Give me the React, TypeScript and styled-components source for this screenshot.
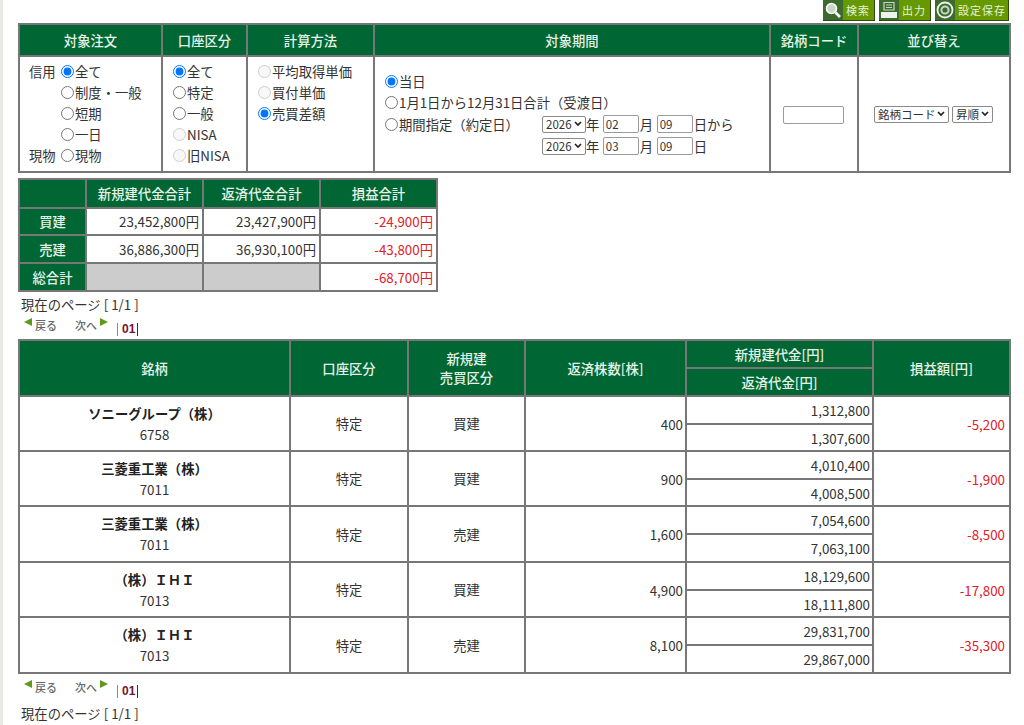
import styled, { createGlobalStyle } from 'styled-components';

const GlobalStyle = createGlobalStyle`
  html, body {
    margin: 0;
    padding: 0;
    background: #fff;
  }
  body {
    font-family: 'Noto Sans CJK JP', 'Noto Sans', sans-serif;
    font-size: 13.33px;
    color: #333;
  }
`;

const Page = styled.div`
  width: 1024px;
  height: 725px;
  overflow: hidden;
  box-sizing: border-box;
  border-left: 3px solid #e8e8e4;
  padding: 0 14px 0 15px;
`;

const Toolbar = styled.div`
  display: flex;
  justify-content: flex-end;
  gap: 4px;
  height: 23px;
  padding-right: 1px;
`;

const ToolButton = styled.div<{ $w: number }>`
  width: ${({ $w }) => $w}px;
  height: 21px;
  display: flex;
  align-items: center;
  background: #669900;
  border-right: 1px solid #2f4a10;
  border-bottom: 1px solid #2f4a10;
  box-sizing: border-box;
  color: #e8f2d8;
  font-size: 11px;
  letter-spacing: 1px;
`;

const ToolIcon = styled.span`
  width: 20px;
  height: 20px;
  flex: none;
  display: flex;
  align-items: center;
  justify-content: center;
  background: #3b6b2e;
  margin-right: 3px;
`;

const Grid = styled.table<{ $w: number }>`
  width: ${({ $w }) => $w}px;
  border-collapse: collapse;
  table-layout: fixed;
  border: 2px solid #777;
  background: #fff;
`;

const Head = styled.th<{ $h?: number }>`
  background: #006633;
  color: #e4f2e8;
  font-weight: 500;
  font-size: 13.33px;
  border: 2px solid #777;
  padding: 0;
  height: ${({ $h }) => $h ?? 29}px;
  text-align: center;
`;

const OptionCell = styled.td<{ $h?: number }>`
  border: 2px solid #777;
  padding: 0;
  vertical-align: top;
  color: #333;
  height: ${({ $h }) => ($h ? `${$h}px` : 'auto')};
`;

const CenterCell = styled(OptionCell)`
  vertical-align: middle;
  text-align: center;
`;

const OptionList = styled.div<{ $pl: number }>`
  display: flex;
  flex-direction: column;
  padding: 4px 0 0 ${({ $pl }) => $pl}px;
`;

const OptionRow = styled.label<{ $h?: number }>`
  display: flex;
  align-items: center;
  height: ${({ $h }) => $h ?? 21}px;
  line-height: 1;
  white-space: nowrap;
`;

const Side = styled.span`
  width: 32px;
  flex: none;
`;

const Radio = styled.input.attrs({ type: 'radio', readOnly: true })`
  width: 13px;
  height: 13px;
  margin: 0 1px 0 0;
  flex: none;
`;

const PeriodBox = styled.div`
  display: flex;
  flex-direction: column;
  padding: 14px 0 0 10px;
`;

const DateRow = styled.div`
  display: flex;
  align-items: center;
  height: 22px;
  white-space: nowrap;
`;

const DatePad = styled.div`
  width: 157px;
  flex: none;
  display: flex;
  align-items: center;
`;

const chevron =
  "url(\"data:image/svg+xml,%3Csvg xmlns='http://www.w3.org/2000/svg' width='8' height='6'%3E%3Cpath d='M1 1 L4 4 L7 1' fill='none' stroke='%23222' stroke-width='1.7'/%3E%3C/svg%3E\")";

const TinySelect = styled.select<{ $w: number }>`
  appearance: none;
  width: ${({ $w }) => $w}px;
  box-sizing: border-box;
  font-family: 'Noto Sans CJK JP', sans-serif;
  font-size: 11.5px;
  line-height: 15px;
  height: 17px;
  padding: 0 0 0 3px;
  margin: 0;
  color: #333;
  background: #fff ${chevron} no-repeat right 3px center;
  border: 1px solid #8a8a8a;
  border-radius: 2px;
`;

const DateInput = styled.input.attrs({ type: 'text', readOnly: true })`
  width: 36px;
  height: 18px;
  box-sizing: border-box;
  border: 1px solid #9a9a9a;
  border-radius: 2px;
  padding: 0 2px;
  margin: 0 1px 0 3.5px;
  font-family: 'Noto Sans CJK JP', sans-serif;
  font-size: 11.5px;
  color: #333;
`;

const CodeInput = styled.input.attrs({ type: 'text', readOnly: true })`
  width: 61px;
  height: 18px;
  box-sizing: border-box;
  border: 1px solid #9a9a9a;
  border-radius: 2px;
  padding: 0;
  margin-right: 2px;
`;

const SortBox = styled.div`
  display: flex;
  justify-content: center;
  gap: 3px;
  padding-right: 1px;
`;

const SummaryTable = styled(Grid)`
  margin-top: 5px;
`;

const Money = styled.td<{ $loss?: boolean }>`
  border: 2px solid #777;
  padding: 0 3px 0 0;
  text-align: right;
  color: ${({ $loss }) => ($loss ? '#e02028' : '#333')};
`;

const BlankCell = styled.td`
  border: 2px solid #777;
  background: #cccccc;
`;

const PageInfo = styled.div<{ $mt: number }>`
  line-height: 18px;
  padding-left: 3px;
  margin-top: ${({ $mt }) => $mt}px;
`;

const Pager = styled.div`
  display: flex;
  height: 21px;
  margin-top: 4px;
  align-items: flex-start;
  padding-left: 6px;
  font-size: 11px;
  font-weight: 500;
  color: #666;
`;

const PagerLink = styled.span<{ $w: number }>`
  width: ${({ $w }) => $w}px;
  display: flex;
  align-items: flex-start;
  gap: 3px;
  line-height: 14px;
`;

const PageNumbers = styled.span`
  margin-top: 5px;
  padding: 0 2px 0 4px;
  border-left: 1px solid #c08040;
  border-right: 1px solid #7a1030;
  font-family: 'Liberation Sans', sans-serif;
  font-weight: 700;
  color: #7a1030;
  line-height: 13px;
  font-size: 12px;
`;

const MainTable = styled(Grid)`
  margin-bottom: 6px;
`;

const Stock = styled(CenterCell)`
  line-height: 21px;
`;

const StockName = styled.div`
  font-weight: 700;
  color: #222;
`;

const Plain = styled(CenterCell)``;

const Amount = styled.td<{ $loss?: boolean; $h?: number }>`
  border: 2px solid #777;
  padding: 1px ${({ $loss }) => ($loss ? 4 : 2)}px 0 0;
  text-align: right;
  height: ${({ $h }) => $h ?? 25}px;
  color: ${({ $loss }) => ($loss ? '#e02028' : '#333')};
`;

function LeftArrow() {
  return (
    <svg width="8" height="8" viewBox="0 0 8 8">
      <path d="M8 0 L0 4 L8 8 Z" fill="#5f9a1e" />
    </svg>
  );
}

function RightArrow() {
  return (
    <svg width="8" height="8" viewBox="0 0 8 8">
      <path d="M0 0 L8 4 L0 8 Z" fill="#5f9a1e" />
    </svg>
  );
}

function PagerBar() {
  return (
    <Pager>
      <PagerLink $w={51}>
        <LeftArrow />
        戻る
      </PagerLink>
      <PagerLink $w={42}>
        次へ
        <RightArrow />
      </PagerLink>
      <PageNumbers>01</PageNumbers>
    </Pager>
  );
}

// full-width brackets and latin letters, as the broker's page prints them
const KABU = '\uFF08株\uFF09';
const IHI = '\uFF29\uFF28\uFF29';

const rows = [
  { name: `ソニーグループ${KABU}`, code: '6758', side: '買建', qty: '400', open: '1,312,800', close: '1,307,600', pl: '-5,200', tall: false },
  { name: `三菱重工業${KABU}`, code: '7011', side: '買建', qty: '900', open: '4,010,400', close: '4,008,500', pl: '-1,900', tall: false },
  { name: `三菱重工業${KABU}`, code: '7011', side: '売建', qty: '1,600', open: '7,054,600', close: '7,063,100', pl: '-8,500', tall: true },
  { name: `${KABU}${IHI}`, code: '7013', side: '買建', qty: '4,900', open: '18,129,600', close: '18,111,800', pl: '-17,800', tall: false },
  { name: `${KABU}${IHI}`, code: '7013', side: '売建', qty: '8,100', open: '29,831,700', close: '29,867,000', pl: '-35,300', tall: true },
];

function RowGroup({ row }: { row: (typeof rows)[number] }) {
  return (
    <>
      <tr>
        <Stock rowSpan={2}>
          <StockName>{row.name}</StockName>
          {row.code}
        </Stock>
        <Plain rowSpan={2}>特定</Plain>
        <Plain rowSpan={2}>{row.side}</Plain>
        <Amount rowSpan={2}>{row.qty}</Amount>
        <Amount>{row.open}</Amount>
        <Amount rowSpan={2} $loss>{row.pl}</Amount>
      </tr>
      <tr>
        <Amount $h={row.tall ? 25 : 24}>{row.close}</Amount>
      </tr>
    </>
  );
}

export default function App() {
  return (
    <Page>
      <GlobalStyle />
      <Toolbar>
        <ToolButton $w={52}>
          <ToolIcon>
            <svg width="18" height="18" viewBox="0 0 18 18">
              <circle cx="7.5" cy="7.5" r="5" fill="#c9d8c4" stroke="#fff" strokeWidth="1.6" />
              <path d="M11.5 11.5 L16 16" stroke="#fff" strokeWidth="2.6" />
            </svg>
          </ToolIcon>
          検索
        </ToolButton>
        <ToolButton $w={52}>
          <ToolIcon>
            <svg width="18" height="18" viewBox="0 0 18 18">
              <path d="M4 1.5 H14 V9 H4 Z" fill="none" stroke="#c9d8c4" strokeWidth="1.2" />
              <path d="M6 4 H12 M6 6.5 H12" stroke="#c9d8c4" strokeWidth="1" />
              <path d="M1 11 H17 V17 H1 Z" fill="#eef2ea" />
            </svg>
          </ToolIcon>
          出力
        </ToolButton>
        <ToolButton $w={74}>
          <ToolIcon>
            <svg width="18" height="18" viewBox="0 0 18 18">
              <circle cx="9" cy="9" r="7.5" fill="none" stroke="#eef2ea" strokeWidth="1.8" />
              <circle cx="9" cy="9" r="3.6" fill="none" stroke="#c9d8c4" strokeWidth="2" />
            </svg>
          </ToolIcon>
          設定保存
        </ToolButton>
      </Toolbar>

      <Grid $w={991}>
        <colgroup>
          <col width="143" />
          <col width="85" />
          <col width="127" />
          <col width="396" />
          <col width="88" />
          <col width="152" />
        </colgroup>
        <thead>
          <tr>
            <Head $h={30}>対象注文</Head>
            <Head $h={30}>口座区分</Head>
            <Head $h={30}>計算方法</Head>
            <Head $h={30}>対象期間</Head>
            <Head $h={30}>銘柄コード</Head>
            <Head $h={30}>並び替え</Head>
          </tr>
        </thead>
        <tbody>
          <tr>
            <OptionCell $h={114}>
              <OptionList $pl={9}>
                <OptionRow><Side>信用</Side><Radio defaultChecked name="a" />全て</OptionRow>
                <OptionRow><Side /><Radio name="a" />制度・一般</OptionRow>
                <OptionRow><Side /><Radio name="a" />短期</OptionRow>
                <OptionRow><Side /><Radio name="a" />一日</OptionRow>
                <OptionRow><Side>現物</Side><Radio name="a" />現物</OptionRow>
              </OptionList>
            </OptionCell>
            <OptionCell>
              <OptionList $pl={10}>
                <OptionRow><Radio defaultChecked name="b" />全て</OptionRow>
                <OptionRow><Radio name="b" />特定</OptionRow>
                <OptionRow><Radio name="b" />一般</OptionRow>
                <OptionRow><Radio disabled name="b" />NISA</OptionRow>
                <OptionRow><Radio disabled name="b" />旧NISA</OptionRow>
              </OptionList>
            </OptionCell>
            <OptionCell>
              <OptionList $pl={10}>
                <OptionRow><Radio disabled name="c" />平均取得単価</OptionRow>
                <OptionRow><Radio disabled name="c" />買付単価</OptionRow>
                <OptionRow><Radio defaultChecked name="c" />売買差額</OptionRow>
              </OptionList>
            </OptionCell>
            <OptionCell>
              <PeriodBox>
                <OptionRow><Radio defaultChecked name="d" />当日</OptionRow>
                <OptionRow><Radio name="d" />{'1月1日から12月31日合計\uFF08受渡日\uFF09'}</OptionRow>
                <DateRow>
                  <DatePad><Radio name="d" />{'期間指定\uFF08約定日\uFF09'}</DatePad>
                  <TinySelect $w={44} defaultValue="2026"><option>2026</option></TinySelect>年
                  <DateInput defaultValue="02" />月
                  <DateInput defaultValue="09" />日から
                </DateRow>
                <DateRow>
                  <DatePad />
                  <TinySelect $w={44} defaultValue="2026"><option>2026</option></TinySelect>年
                  <DateInput defaultValue="03" />月
                  <DateInput defaultValue="09" />日
                </DateRow>
              </PeriodBox>
            </OptionCell>
            <CenterCell>
              <CodeInput />
            </CenterCell>
            <CenterCell>
              <SortBox>
                <TinySelect $w={75}><option>銘柄コード</option></TinySelect>
                <TinySelect $w={41}><option>昇順</option></TinySelect>
              </SortBox>
            </CenterCell>
          </tr>
        </tbody>
      </Grid>

      <SummaryTable $w={418}>
        <colgroup>
          <col width="67" />
          <col width="117" />
          <col width="117" />
          <col width="117" />
        </colgroup>
        <thead>
          <tr>
            <Head $h={27} />
            <Head $h={27}>新規建代金合計</Head>
            <Head $h={27}>返済代金合計</Head>
            <Head $h={27}>損益合計</Head>
          </tr>
        </thead>
        <tbody>
          <tr>
            <Head $h={25}>買建</Head>
            <Money>23,452,800円</Money>
            <Money>23,427,900円</Money>
            <Money $loss>-24,900円</Money>
          </tr>
          <tr>
            <Head $h={26}>売建</Head>
            <Money>36,886,300円</Money>
            <Money>36,930,100円</Money>
            <Money $loss>-43,800円</Money>
          </tr>
          <tr>
            <Head $h={26}>総合計</Head>
            <BlankCell />
            <BlankCell />
            <Money $loss>-68,700円</Money>
          </tr>
        </tbody>
      </SummaryTable>

      <PageInfo $mt={4}>現在のページ [ 1/1 ]</PageInfo>
      <PagerBar />

      <MainTable $w={991}>
        <colgroup>
          <col width="271" />
          <col width="118" />
          <col width="117" />
          <col width="161" />
          <col width="187" />
          <col width="137" />
        </colgroup>
        <thead>
          <tr>
            <Head rowSpan={2}>銘柄</Head>
            <Head rowSpan={2}>口座区分</Head>
            <Head rowSpan={2}>新規建<br />売買区分</Head>
            <Head rowSpan={2}>返済株数[株]</Head>
            <Head $h={26}>新規建代金[円]</Head>
            <Head rowSpan={2}>損益額[円]</Head>
          </tr>
          <tr>
            <Head $h={26}>返済代金[円]</Head>
          </tr>
        </thead>
        <tbody>
          {rows.map((row) => (
            <RowGroup key={row.name + row.side} row={row} />
          ))}
        </tbody>
      </MainTable>

      <PagerBar />
      <PageInfo $mt={4}>現在のページ [ 1/1 ]</PageInfo>
    </Page>
  );
}
